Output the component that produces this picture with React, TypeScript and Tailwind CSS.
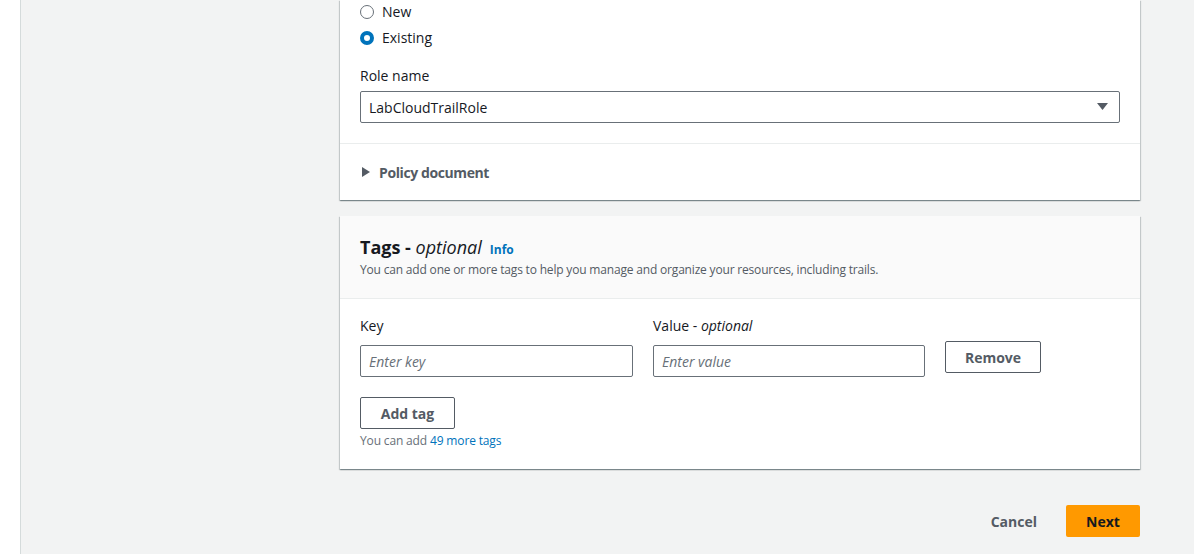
import React, { useState } from 'react';

const font = { fontFamily: '"Open Sans", "Noto Sans", Arial, sans-serif' };

const Radio = ({ checked, label, onClick }: { checked: boolean; label: string; onClick: () => void }) => (
  <label className="flex items-center h-5 cursor-pointer" onClick={onClick}>
    <span
      className={`w-[14px] h-[14px] rounded-full box-border shrink-0 ${checked ? 'border-[4px] border-[#0073bb] bg-white' : 'border border-[#687078] bg-white'}`}
    />
    <span className="ml-[8px] text-[14px] text-[#16191f] leading-5">{label}</span>
  </label>
);

export default function App() {
  const [roleType, setRoleType] = useState<'new' | 'existing'>('existing');
  const [policyOpen, setPolicyOpen] = useState(false);
  const [key, setKey] = useState('');
  const [value, setValue] = useState('');

  return (
    <div className="h-[554px] w-full flex bg-[#f2f3f3] overflow-hidden" style={font}>
      <div className="w-[21px] shrink-0 bg-white border-r border-[#d5dbdb]" />
      <div className="flex-1 pl-[319px]">
        <div className="w-[800px]">
          {/* IAM role card (top scrolled off) */}
          <div className="bg-white h-[200px] shadow-[0_1px_1px_0_rgba(0,28,36,0.3),1px_1px_1px_0_rgba(0,28,36,0.15),-1px_1px_1px_0_rgba(0,28,36,0.15)]">
            <div className="px-5 pt-[2px] pb-5">
              <div className="flex flex-col gap-[6px]">
                <Radio checked={roleType === 'new'} label="New" onClick={() => setRoleType('new')} />
                <Radio checked={roleType === 'existing'} label="Existing" onClick={() => setRoleType('existing')} />
              </div>
              <div className="mt-[18px] text-[14px] leading-5 text-[#16191f]">Role name</div>
              <div className="mt-[5px] h-[32px] border border-[#687078] rounded-[2px] flex items-center justify-between pl-[8px] pr-[11px]">
                <span className="text-[14px] text-[#16191f]">LabCloudTrailRole</span>
                <svg width="11" height="8" viewBox="0 0 11 8">
                  <path d="M0 0 H11 L5.5 7 Z" fill="#545b64" />
                </svg>
              </div>
            </div>
            <div className="border-t border-[#eaeded] px-5 pt-[18px]">
              <button className="flex items-center h-5" onClick={() => setPolicyOpen(!policyOpen)}>
                <svg width="8" height="10" viewBox="0 0 8 10" className={`ml-[2px] ${policyOpen ? 'rotate-90' : ''}`}>
                  <path d="M0 0 L8 5 L0 10 Z" fill="#545b64" />
                </svg>
                <span className="ml-[9px] text-[14px] font-bold tracking-[-0.4px] text-[#545b64]">Policy document</span>
              </button>
            </div>
          </div>

          {/* Tags card */}
          <div className="mt-4 bg-white shadow-[0_1px_1px_0_rgba(0,28,36,0.3),1px_1px_1px_0_rgba(0,28,36,0.15),-1px_1px_1px_0_rgba(0,28,36,0.15)]">
            <div className="bg-[#fafafa] border-b border-[#eaeded] px-5 pt-5 pb-5">
              <div className="flex items-baseline h-[22px]">
                <h2 className="text-[18px] leading-[22px] font-bold text-[#16191f]">
                  Tags - <i className="font-normal">optional</i>
                </h2>
                <a className="ml-[8px] text-[12px] font-bold text-[#0073bb] cursor-pointer">Info</a>
              </div>
              <p className="mt-[4px] text-[12px] leading-4 tracking-[-0.18px] text-[#545b64]">
                You can add one or more tags to help you manage and organize your resources, including trails.
              </p>
            </div>
            <div className="px-5 pt-[17px] pb-5">
              <div className="flex gap-5">
                <div className="w-[273px]">
                  <div className="text-[14px] leading-5 text-[#16191f]">Key</div>
                  <input
                    value={key}
                    onChange={(e) => setKey(e.target.value)}
                    placeholder="Enter key"
                    className="mt-[9px] w-full h-[32px] border border-[#687078] rounded-[2px] px-[8px] text-[14px] text-[#16191f] placeholder:italic placeholder:text-[#687078] outline-none"
                  />
                </div>
                <div className="w-[272px]">
                  <div className="text-[14px] leading-5 text-[#16191f]">
                    Value - <i>optional</i>
                  </div>
                  <input
                    value={value}
                    onChange={(e) => setValue(e.target.value)}
                    placeholder="Enter value"
                    className="mt-[9px] w-full h-[32px] border border-[#687078] rounded-[2px] px-[8px] text-[14px] text-[#16191f] placeholder:italic placeholder:text-[#687078] outline-none"
                  />
                </div>
                <div>
                  <button className="mt-[25px] w-[96px] h-[32px] border border-[#545b64] rounded-[2px] bg-white text-[14px] font-bold text-[#545b64]">
                    Remove
                  </button>
                </div>
              </div>
              <button className="mt-5 w-[95px] h-[32px] border border-[#545b64] rounded-[2px] bg-white text-[14px] font-bold text-[#545b64]">
                Add tag
              </button>
              <p className="mt-[4px] text-[12px] leading-4 tracking-[-0.15px] text-[#687078]">
                You can add <span className="text-[#0073bb]">49 more tags</span>
              </p>
            </div>
          </div>

          {/* Footer actions */}
          <div className="mt-[36px] flex justify-end items-center">
            <button className="h-[32px] px-[6px] text-[14px] font-bold text-[#545b64]">Cancel</button>
            <button className="ml-[23px] w-[74px] h-[32px] rounded-[2px] bg-[#ff9900] text-[14px] font-bold text-[#16191f]">
              Next
            </button>
          </div>
        </div>
      </div>
    </div>
  );
}
